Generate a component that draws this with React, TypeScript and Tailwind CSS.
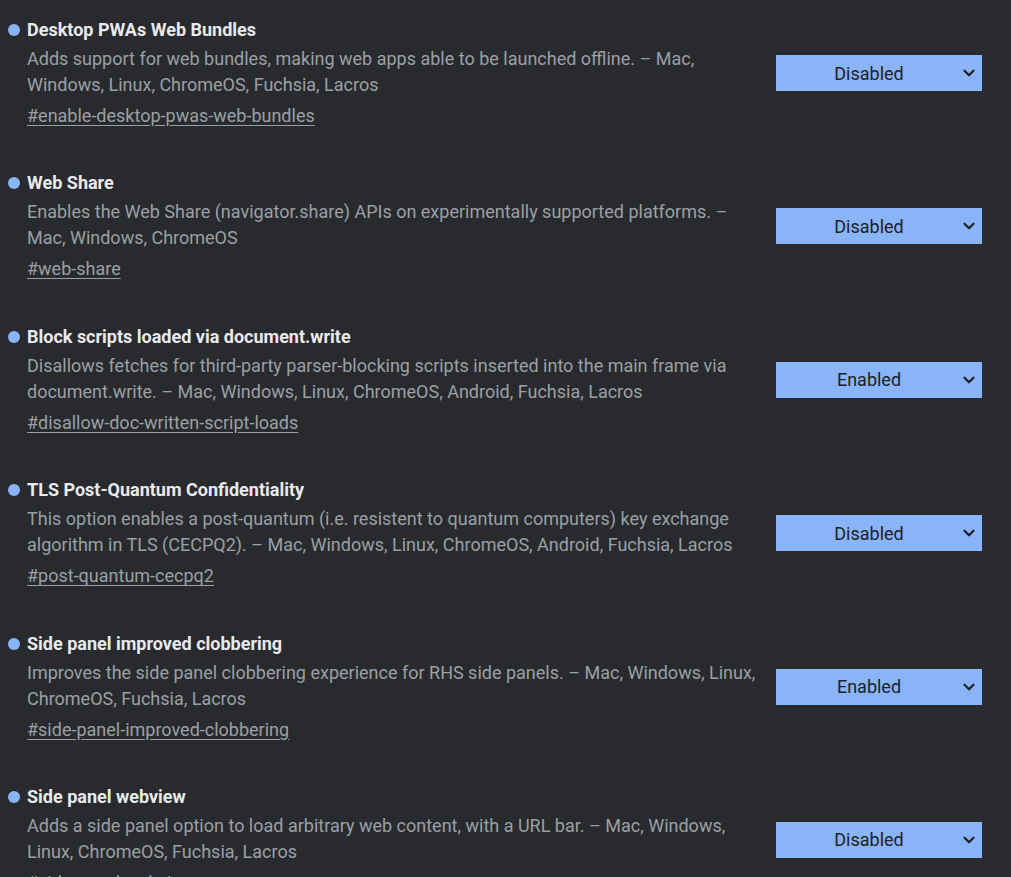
import { ChevronDown } from "lucide-react"

interface Flag {
  title: string
  desc: string
  tag: string
  value: "Enabled" | "Disabled"
}

const flags: Flag[] = [
  {
    title: "Desktop PWAs Web Bundles",
    desc: "Adds support for web bundles, making web apps able to be launched offline. – Mac, Windows, Linux, ChromeOS, Fuchsia, Lacros",
    tag: "#enable-desktop-pwas-web-bundles",
    value: "Disabled",
  },
  {
    title: "Web Share",
    desc: "Enables the Web Share (navigator.share) APIs on experimentally supported platforms. – Mac, Windows, ChromeOS",
    tag: "#web-share",
    value: "Disabled",
  },
  {
    title: "Block scripts loaded via document.write",
    desc: "Disallows fetches for third-party parser-blocking scripts inserted into the main frame via document.write. – Mac, Windows, Linux, ChromeOS, Android, Fuchsia, Lacros",
    tag: "#disallow-doc-written-script-loads",
    value: "Enabled",
  },
  {
    title: "TLS Post-Quantum Confidentiality",
    desc: "This option enables a post-quantum (i.e. resistent to quantum computers) key exchange algorithm in TLS (CECPQ2). – Mac, Windows, Linux, ChromeOS, Android, Fuchsia, Lacros",
    tag: "#post-quantum-cecpq2",
    value: "Disabled",
  },
  {
    title: "Side panel improved clobbering",
    desc: "Improves the side panel clobbering experience for RHS side panels. – Mac, Windows, Linux, ChromeOS, Fuchsia, Lacros",
    tag: "#side-panel-improved-clobbering",
    value: "Enabled",
  },
  {
    title: "Side panel webview",
    desc: "Adds a side panel option to load arbitrary web content, with a URL bar. – Mac, Windows, Linux, ChromeOS, Fuchsia, Lacros",
    tag: "#side-panel-webview",
    value: "Disabled",
  },
]

function FlagRow({ flag }: { flag: Flag }) {
  return (
    <div className="flex items-start mb-[44.4px]">
      <div className="w-[765px] shrink-0">
        <div className="flex items-center h-5">
          <span className="w-3 h-3 rounded-full bg-[#8ab4f8] ml-2 mr-[7px]" />
          <h2 className="text-[18px] leading-5 font-bold text-[#e8eaed]">{flag.title}</h2>
        </div>
        <p className="mt-[6px] ml-[27px] text-[18px] leading-[26px] text-[#9aa0a6]">{flag.desc}</p>
        <a href="#" className="block mt-[5px] ml-[27px] text-[18px] leading-[26px] text-[#9aa0a6] underline underline-offset-[3px]">
          {flag.tag}
        </a>
      </div>
      <div className="ml-[11px] mt-[35px] w-[206px] h-9 bg-[#8ab4f8] flex items-center pl-[2px] pr-1 text-[#202124] text-[18px]">
        <span className="flex-1 text-center">{flag.value}</span>
        <ChevronDown className="w-[18px] h-[18px]" strokeWidth={3} />
      </div>
    </div>
  )
}

export default function App() {
  return (
    <div className="min-h-screen bg-[#292a2d] pt-5 font-['Roboto',sans-serif]">
      {flags.map((f) => (
        <FlagRow key={f.tag} flag={f} />
      ))}
    </div>
  )
}
